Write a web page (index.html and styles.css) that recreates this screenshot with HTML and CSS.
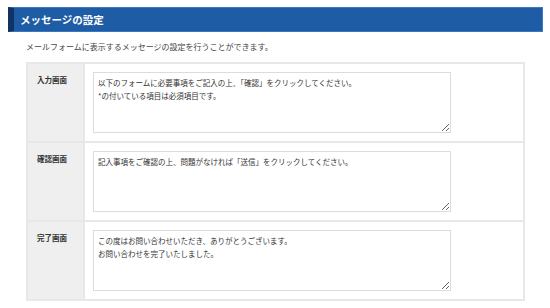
FILE: index.html
```html
<!DOCTYPE html>
<html lang="ja">
<head>
  <meta charset="UTF-8" />
  <meta name="viewport" content="width=device-width, initial-scale=1.0" />
  <title>メッセージの設定</title>
  <link rel="stylesheet" href="styles.css">
</head>
<body>
  <div class="page">
    <h2 class="section-title">メッセージの設定</h2>
    <p class="lead">メールフォームに表示するメッセージの設定を行うことができます。</p>

    <table class="form-table">
      <tr>
        <th>入力画面</th>
        <td><textarea class="msg">以下のフォームに必要事項をご記入の上、「確認」をクリックしてください。
*の付いている項目は必須項目です。</textarea></td>
      </tr>
      <tr>
        <th>確認画面</th>
        <td><textarea class="msg">記入事項をご確認の上、問題がなければ「送信」をクリックしてください。</textarea></td>
      </tr>
      <tr>
        <th>完了画面</th>
        <td><textarea class="msg">この度はお問い合わせいただき、ありがとうございます。
お問い合わせを完了いたしました。</textarea></td>
      </tr>
    </table>
  </div>
</body>
</html>
```

FILE: styles.css
```css
body {
  margin: 0;
  padding: 0;
  background-color: #fff;
  color: #333;
  font-family: 'Noto Sans CJK JP', 'Noto Sans', sans-serif;
}
.page {
  padding: 7px 7px 0 8px;
}
.section-title {
  margin: 0;
  height: 23px;
  line-height: 23px;
  padding-left: 6px;
  font-size: 10.5px;
  font-weight: bold;
  color: #fff;
  background-color: #1f5ca6;
  border: 1px solid #3a78c4;
  border-left: 6px solid #0f3463;
}
.lead {
  margin: 9px 0 0 18px;
  font-size: 8px;
  line-height: 12px;
  color: #444;
}
.form-table {
  margin: 9px 0 0 18px;
  width: 499px;
  border-collapse: collapse;
  border: 2px solid #e8e8e8;
}
.form-table th,
.form-table td {
  border-top: 2px solid #e8e8e8;
  vertical-align: top;
}
.form-table th {
  width: 46px;
  padding: 10px 0 0 9px;
  background-color: #efefef;
  border-right: 2px solid #e8e8e8;
  text-align: left;
  font-size: 7.5px;
  font-weight: bold;
  line-height: 12px;
  color: #333;
}
.form-table td {
  padding: 8px 0 8px 8px;
}
.msg {
  display: block;
  box-sizing: border-box;
  width: 358px;
  height: 61px;
  margin: 0;
  padding: 3px 4px;
  border: 1px solid #dcdcdc;
  font-family: 'Noto Sans CJK JP', 'Noto Sans', sans-serif;
  font-size: 7.5px;
  line-height: 13px;
  color: #333;
  resize: vertical;
}
```
